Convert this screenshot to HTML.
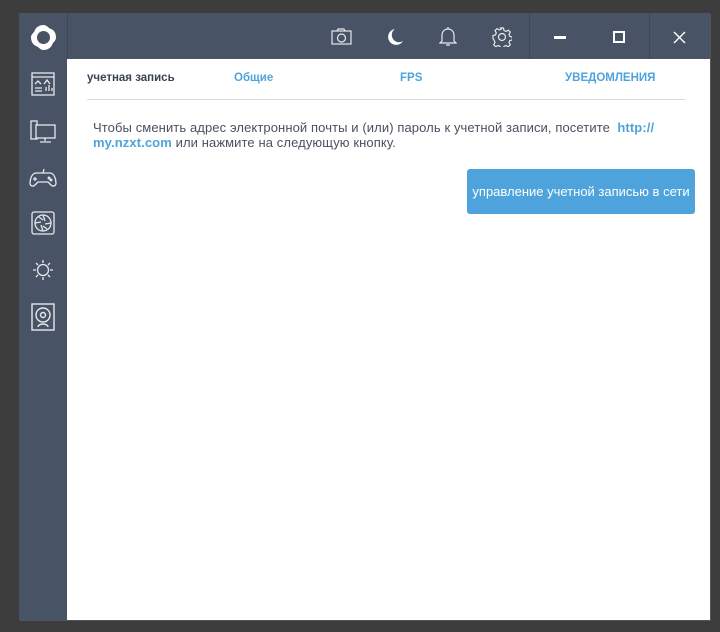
<!DOCTYPE html>
<html><head><meta charset="utf-8"><style>
*{margin:0;padding:0;box-sizing:border-box}
body{width:720px;height:632px;background:#3d3d3d;position:relative;overflow:hidden;font-family:"Liberation Sans","DejaVu Sans",sans-serif}
#win{position:absolute;left:19px;top:13px;width:691px;height:607px;background:#fff;box-shadow:1px 1px 0 #555}
#side{position:absolute;left:0;top:0;width:48px;height:607px;background:#485366}
#top{position:absolute;left:48px;top:0;right:0;height:46px;background:#485366;border-left:1px solid #3e4757}
.sep{position:absolute;top:0;width:1px;height:46px;background:#3f4859}
.ic{position:absolute}
.tab{position:absolute;top:59px;font-size:11.5px;font-weight:bold;color:#4fa3dc}
#line{position:absolute;left:68px;top:86px;width:598px;height:1px;background:#dcdcdc}
#txt{position:absolute;left:74px;top:107px;width:600px;font-size:13px;line-height:15px;color:#4a5160;letter-spacing:0.1px}
#txt b{color:#4fa3dc}
#btn{position:absolute;left:448px;top:156px;width:228px;height:45px;background:#4fa3dc;border-radius:3px;color:#fff;font-size:13px;text-align:center;line-height:45px}
</style></head><body>
<div id="win">
<div id="side">
<svg class="ic" style="left:11px;top:11px" width="27" height="27" viewBox="0 0 27 27"><path d="M13.5 1 C17 1 18 4 21 5 C24 6 26 9 26 13.5 C26 17 23 18 22 21 C21 24 17 26 13.5 26 C10 26 9 23 6 22 C3 21 1 17 1 13.5 C1 10 4 9 5 6 C6 3 10 1 13.5 1Z" fill="#fff"/><circle cx="13.5" cy="13.5" r="6.5" fill="#485366"/></svg>
<svg class="ic" style="left:12px;top:58px" width="24" height="26" viewBox="0 0 24 26" fill="none" stroke="#e6e8ec" stroke-width="1.3"><rect x="1" y="2" width="22" height="22"/><path d="M1 6h22M4 13l3-3 3 3M13 13l3-4 3 4M4 17h7M4 20h7M15 20v-4M18 20v-6M21 20v-3"/></svg>
<svg class="ic" style="left:11px;top:106px" width="26" height="25" viewBox="0 0 26 25" fill="none" stroke="#e6e8ec" stroke-width="1.3"><rect x="1" y="2" width="6" height="18"/><rect x="6" y="6" width="19" height="13" fill="#485366"/><path d="M15 19v3M10 23h11"/></svg>
<svg class="ic" style="left:10px;top:155px" width="28" height="20" viewBox="0 0 28 20" fill="none" stroke="#e6e8ec" stroke-width="1.3"><path d="M15 1l-1 4M7 5h14c4 0 6 6 6 10 0 3-3 4-5 2l-3-3H9l-3 3c-2 2-5 1-5-2 0-4 2-10 6-10z M6 9v4M4 11h4"/><circle cx="20" cy="10" r=".8"/><circle cx="22" cy="12" r=".8"/></svg>
<svg class="ic" style="left:12px;top:198px" width="24" height="24" viewBox="0 0 24 24" fill="none" stroke="#e6e8ec" stroke-width="1.3"><rect x="1" y="1" width="22" height="22" rx="2"/><circle cx="12" cy="12" r="8"/><path d="M12 4l2 6M20 12l-6 1M12 20l-2-6M4 12l6-1M8 6l4 3M16 18l-4-3"/></svg>
<svg class="ic" style="left:13px;top:246px" width="22" height="22" viewBox="0 0 22 22" fill="none" stroke="#e6e8ec" stroke-width="1.3"><circle cx="11" cy="11" r="5.5"/><path d="M11 1v3M11 18v3M1 11h3M18 11h3M4 4l2 2M16 16l2 2M4 18l2-2M16 6l2-2"/></svg>
<svg class="ic" style="left:12px;top:290px" width="24" height="28" viewBox="0 0 24 28" fill="none" stroke="#e6e8ec" stroke-width="1.4"><rect x="1" y="1" width="22" height="26"/><circle cx="12" cy="12" r="7"/><circle cx="12" cy="12" r="2.5"/><path d="M7 24a5 3 0 0 1 10 0"/></svg>
</div>
<div id="top">
<div class="sep" style="left:461px"></div><div class="sep" style="left:581px"></div>
<svg class="ic" style="left:263px;top:15px" width="21" height="17" viewBox="0 0 21 17" fill="none" stroke="#e6e8ec" stroke-width="1.2"><rect x="1" y="3" width="19" height="13"/><path d="M6 3l1-2h6l1 2"/><circle cx="10.5" cy="10" r="4"/></svg>
<svg class="ic" style="left:320px;top:15px" width="16" height="17" viewBox="0 0 16 17"><path d="M7 1a8 8 0 1 0 8 12A7 7 0 0 1 7 1z" fill="#fff"/></svg>
<svg class="ic" style="left:371px;top:13px" width="18" height="21" viewBox="0 0 18 21" fill="none" stroke="#e6e8ec" stroke-width="1.2"><path d="M9 1v2M3 15V9a6 6 0 0 1 12 0v6l2 2H1zM7 19h4"/></svg>
<svg class="ic" style="left:424px;top:14px" width="20" height="20" viewBox="0 0 20 20" fill="none" stroke="#e6e8ec" stroke-width="1.2"><circle cx="10" cy="10" r="3.5"/><path d="M8.5 1h3l.5 2.5 2 1 2.3-1.4 2 2-1.3 2.3.8 2 2.5.6v3l-2.5.5-.8 2 1.3 2.3-2 2-2.3-1.3-2 .8-.5 2.5h-3l-.5-2.5-2-.8-2.3 1.3-2-2 1.3-2.3-.8-2L1 11.5v-3l2.5-.6.8-2L3 3.6l2-2 2.3 1.4 2-1z"/></svg>
<div style="position:absolute;left:486px;top:23px;width:12px;height:3px;background:#fff"></div>
<div style="position:absolute;left:545px;top:18px;width:12px;height:12px;border:2px solid #fff"></div>
<svg class="ic" style="left:605px;top:18px" width="13" height="13" viewBox="0 0 13 13" stroke="#fff" stroke-width="1.4"><path d="M1 1l11 11M12 1L1 12"/></svg>
</div>
<div class="tab" style="left:68px;color:#3c4250">учетная запись</div>
<div class="tab" style="left:215px">Общие</div>
<div class="tab" style="left:381px">FPS</div>
<div class="tab" style="left:546px">УВЕДОМЛЕНИЯ</div>
<div id="line"></div>
<div id="txt">Чтобы сменить адрес электронной почты и (или) пароль к учетной записи, посетите &nbsp;<b>http://<br>my.nzxt.com</b> или нажмите на следующую кнопку.</div>
<div id="btn">управление учетной записью в сети</div>
</div>
</body></html>
